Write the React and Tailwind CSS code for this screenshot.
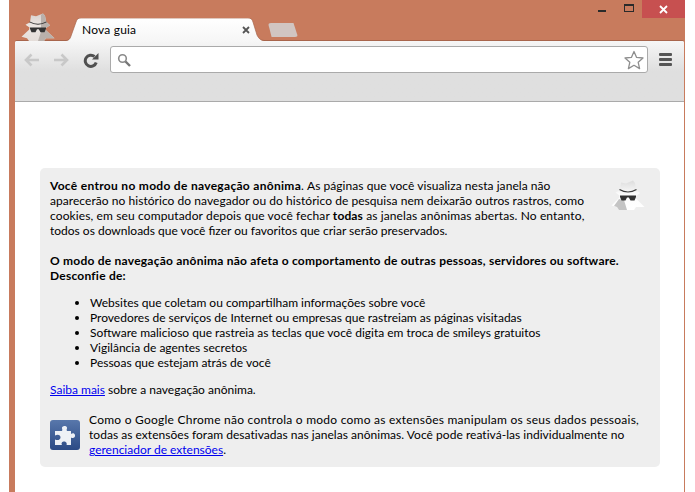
import React from "react";

function Spy({ className, tab, id }) {
  const body = "M10 2.5 L15 3.5 L22 0.5 L24 3 L25.2 9.5 L29 13 L25 16 L25 18.5 L33.5 27 L25 27 L23 30 L8 30 L6 27 L0.5 25.5 L8 18 L8.5 15.5 L4.5 12.5 L9 10 Z";
  return (
    <svg viewBox="0 0 34 30" preserveAspectRatio="none" className={className}>
      <defs>
        <linearGradient id={id} x1="0" x2="0" y1="0" y2="1">
          <stop offset="0" stopColor={tab ? "#d8d1cd" : "#dcdcdc"} />
          <stop offset="0.45" stopColor={tab ? "#ece6e2" : "#fbfbfb"} />
          <stop offset="1" stopColor={tab ? "#e4ddd9" : "#ffffff"} />
        </linearGradient>
      </defs>
      <path d={body} fill={`url(#${id})`} />
      {tab ? (
        <path d="M20 2 L22 0.5 L24 3 L25.2 9.5 L29 13 L25 16 L25 18.5 L33.5 27 L25 27 L23 30 L17 30 L20 20 Z" fill="#b9b1ac" />
      ) : (
        <path d="M8 19 L13 20 L16 30 L8 30 L6 27 L3 26 Z" fill="#c4c4c4" />
      )}
      <path d="M8.5 9.5 Q17 14.5 25.5 9.5" fill="none" stroke="#3a3a3a" strokeWidth="1.2" />
      <path d="M9 15.5 H25 V17 L23.5 20.5 H19.5 L17.8 17.5 H16 L14.5 20.5 H10.5 L9 17 Z" fill="#333333" />
    </svg>
  );
}

function Tab() {
  return (
    <div className="relative w-[205px] h-[23px] mt-[18px] ml-[55px]">
      <svg viewBox="0 0 205 23" className="absolute inset-0 w-full h-full">
        <defs>
          <linearGradient id="tabG" x1="0" x2="0" y1="0" y2="1">
            <stop offset="0" stopColor="#ffffff" />
            <stop offset="1" stopColor="#f6f6f6" />
          </linearGradient>
        </defs>
        <path d="M0 23 C5 23 6 21 7 18 L12 4 C13 1 14 0 17 0 H184 C187 0 188 1 189 4 L193 17 C195 21 197 23 202 23 Z" fill="url(#tabG)" />
        <path d="M0 22.6 C5 22.6 6 21 7 18 L12 4 C13 1 14 0 17 0 H184 C187 0 188 1 189 4 L193 17 C195 21 197 22.6 202 22.6" fill="none" stroke="#a8654c" strokeWidth="0.7" />
      </svg>
      <span className="absolute left-[18px] top-[4px] text-[12px] leading-[15px] tracking-[0.2px] text-black">Nova guia</span>
      <svg viewBox="0 0 8 8" className="absolute left-[178px] top-[8px] w-[8px] h-[8px]">
        <path d="M1 1 L7 7 M7 1 L1 7" stroke="#555" strokeWidth="1.8" />
      </svg>
    </div>
  );
}

function Arrow({ flip }) {
  return (
    <svg viewBox="0 0 16 14" className={`w-[16px] h-[14px] ${flip ? "-scale-x-100" : ""}`}>
      <path d="M7.5 1.5 L2 7 L7.5 12.5 M2.5 7 H15" fill="none" stroke="#c8c8c8" strokeWidth="2.6" />
    </svg>
  );
}

function App() {
  return (
    <div className="w-[695px] h-[492px] overflow-hidden bg-white flex font-['Lato','Noto_Sans',sans-serif]">
      <div className="ml-[9px] w-[676px] h-full bg-[#c87b5d] flex flex-col relative">
        <div className="h-[41px] flex shrink-0 relative z-10">
          <Spy tab id="spyTab" className="absolute left-[12px] top-[13px] w-[34px] h-[28px]" />
          <Tab />
          <div className="w-[30px] h-[14px] mt-[23px] -ml-[1px] bg-[#d1c5c1] rounded-[3px] [clip-path:polygon(0_0,85%_0,100%_100%,12%_100%)]" />
          <div className="ml-auto flex items-start">
            <div className="w-[8px] h-[2px] mt-[10px] bg-[#2a2a2a]" />
            <div className="w-[10px] h-[8px] mt-[4px] ml-[18px] border border-t-2 border-[#2a2a2a]" />
            <div className="w-[43px] h-[18px] ml-[8px] bg-[#c75050] flex items-center justify-center">
              <svg viewBox="0 0 9 9" className="w-[9px] h-[9px]">
                <path d="M1 1 L8 8 M8 1 L1 8" stroke="#fff" strokeWidth="1.8" />
              </svg>
            </div>
          </div>
        </div>
        <div className="ml-[6px] mr-[1px] flex-1 flex flex-col min-h-0 bg-white rounded-t-[2px] shadow-[0_-1px_0_#a8654c]">
          <div className="h-[61px] shrink-0 rounded-t-[2px] border-b border-[#aaaaaa] bg-gradient-to-b from-[#f6f6f6] to-[#dfdfdf] to-50% flex items-start pt-[5px] pl-[9px] pr-[10px]">
            <div className="h-[27px] flex items-center gap-[13px]">
              <Arrow />
              <Arrow flip />
              <svg viewBox="0 0 16 16" className="w-[16px] h-[16px] ml-[1px]">
                <path d="M13.2 10.5 A5.6 5.6 0 1 1 11.5 4.5" fill="none" stroke="#505050" strokeWidth="3" />
                <path d="M9 7.5 L15.5 7.5 L15.5 1 Z" fill="#505050" />
              </svg>
            </div>
            <div className="ml-[11px] w-[538px] h-[27px] bg-white border border-[#aaaaaa] rounded-[3px] flex items-center pl-[6px] pr-[3px] justify-between">
              <svg viewBox="0 0 14 14" className="w-[14px] h-[14px]">
                <circle cx="5.5" cy="5.5" r="3.8" fill="none" stroke="#8a8a8a" strokeWidth="1.6" />
                <path d="M8.5 8.5 L13 13" stroke="#777" strokeWidth="2.4" />
              </svg>
              <svg viewBox="0 0 20 20" className="w-[20px] h-[20px]">
                <path d="M10 1.5 L12.6 7.4 L19 8 L14.2 12.3 L15.6 18.6 L10 15.3 L4.4 18.6 L5.8 12.3 L1 8 L7.4 7.4 Z" fill="#fff" stroke="#8e8e8e" strokeWidth="1.3" strokeLinejoin="round" />
              </svg>
            </div>
            <div className="ml-[11px] h-[27px] flex flex-col justify-center gap-[2px]">
              <div className="w-[13px] h-[3px] bg-[#555] rounded-[1px]" />
              <div className="w-[13px] h-[3px] bg-[#555] rounded-[1px]" />
              <div className="w-[13px] h-[3px] bg-[#555] rounded-[1px]" />
            </div>
          </div>
          <div className="flex-1 min-h-0 pl-[25px] pt-[66px] text-[12px] leading-[15px] text-black">
            <div className="w-[620px] h-[299px] bg-[#eeeeee] rounded-[5px] pl-[10px] pt-[10px] pr-[14px] relative">
              <Spy id="spyCard" className="absolute right-[15px] top-[12px] w-[34px] h-[30px]" />
              <p className="w-[545px]">
                <b className="tracking-[0.3px]">Você entrou no modo de navegação anônima</b>. <span className="tracking-[0.05px]">As páginas que você visualiza nesta janela não aparecerão no histórico do navegador ou do histórico de pesquisa nem deixarão outros rastros, como</span> <span className="tracking-[0.12px]">cookies, em seu computador depois que você fechar <b>todas</b> as janelas anônimas abertas. No entanto,</span> todos os downloads que você fizer ou favoritos que criar serão preservados.
              </p>
              <p className="mt-[15px] font-bold tracking-[0.23px]">
                O modo de navegação anônima não afeta o comportamento de outras pessoas, servidores ou software. Desconfie de:
              </p>
              <ul className="mt-[12px] pl-[40px] list-disc">
                <li>Websites que coletam ou compartilham informações sobre você</li>
                <li>Provedores de serviços de Internet ou empresas que rastreiam as páginas visitadas</li>
                <li>Software malicioso que rastreia as teclas que você digita em troca de smileys gratuitos</li>
                <li>Vigilância de agentes secretos</li>
                <li>Pessoas que estejam atrás de você</li>
              </ul>
              <p className="mt-[12px]">
                <a className="text-[#0000ee] underline">Saiba mais</a> sobre a navegação anônima.
              </p>
              <div className="mt-[15px] flex items-center gap-[9px]">
                <svg viewBox="0 0 30 30" className="w-[30px] h-[30px] shrink-0">
                  <defs>
                    <linearGradient id="pz" x1="0" x2="0" y1="0" y2="1">
                      <stop offset="0" stopColor="#5877ab" />
                      <stop offset="1" stopColor="#2c4a85" />
                    </linearGradient>
                  </defs>
                  <rect width="30" height="30" rx="3" fill="url(#pz)" />
                  <path d="M5 11 H12 C13 9.5 11.5 8.5 12 7.5 C13 5.5 16.5 5.5 17 7.5 C17.5 8.5 16 9.5 17 11 H21 V14 C22.5 13 24.5 13 25 15 C25.5 17.5 23 19 21 17.5 V25 H16.5 C17.5 23 15.5 21 13.5 21.5 C11.5 22 11 24 12 25 H5 V19.5 C8 21 10.5 19.5 10.5 17.5 C10.5 15 8 14 5 15.5 Z" fill="#eef1f6" />
                </svg>
                <p className="w-[555px]">
                  <span className="tracking-[0.24px]">Como o Google Chrome não controla o modo como as extensões manipulam os seus dados pessoais,</span> <span className="tracking-[0.03px]">todas as extensões foram desativadas nas janelas anônimas. Você pode reativá-las individualmente no</span> <a className="text-[#0000ee] underline">gerenciador de extensões</a>.
                </p>
              </div>
            </div>
          </div>
        </div>
      </div>
    </div>
  );
}

export default App;
